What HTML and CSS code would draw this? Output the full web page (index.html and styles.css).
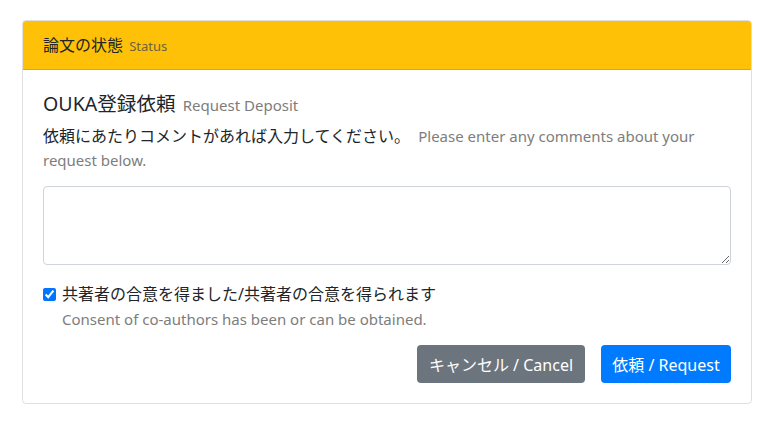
FILE: index.html
```html
<!DOCTYPE html>
<html lang="ja">
<head>
<meta charset="utf-8">
<link rel="stylesheet" href="styles.css">
</head>
<body>
<div class="card">
  <div class="card-header">論文の状態 <small class="muted">Status</small></div>
  <div class="card-body">
    <h5 class="title">OUKA登録依頼 <small class="muted sub">Request Deposit</small></h5>
    <p class="desc">依頼にあたりコメントがあれば入力してください。 <span class="muted en">Please enter any comments about your request below.</span></p>
    <textarea class="comment"></textarea>
    <div class="check">
      <input type="checkbox" checked class="check-input">
      <div>
        <div class="check-label">共著者の合意を得ました/共著者の合意を得られます</div>
        <div class="muted en small">Consent of co-authors has been or can be obtained.</div>
      </div>
    </div>
    <div class="actions">
      <button class="btn btn-secondary">キャンセル / Cancel</button>
      <button class="btn btn-primary">依頼 / Request</button>
    </div>
  </div>
</div>
</body>
</html>
```
FILE: styles.css
```css
* { box-sizing: border-box; }
body {
  margin: 0;
  padding: 20px 22px;
  font-family: "Noto Sans", "Noto Sans CJK JP", sans-serif;
  font-size: 16px;
  color: #212529;
  background: #fff;
}
.card {
  border: 1px solid rgba(0,0,0,.125);
  border-radius: 4px;
  width: 730px;
}
.card-header {
  background: #ffc107;
  border-bottom: 1px solid rgba(0,0,0,.125);
  border-radius: 3px 3px 0 0;
  padding: 12px 20px;
  height: 49px;
  font-size: 16px;
  line-height: 24px;
}
.card-header .muted { font-size: 13px; color: #6c6242; margin-left: 2px; }
.muted { color: #7d7d7d; }
.card-body { padding: 21px 20px 20px; }
.title {
  margin: 0 0 6px;
  font-size: 19.6px;
  font-weight: 400;
  line-height: 26px;
}
.title .sub { font-size: 15px; margin-left: 2px; }
.desc {
  margin: 0 0 14px;
  font-size: 16px;
  line-height: 24px;
}
.en { font-size: 15px; }
.desc .en { margin-left: 4px; }
.comment {
  display: block;
  width: 688px;
  height: 79px;
  border: 1px solid #ced4da;
  border-radius: 4px;
  margin: 0 0 17px;
  resize: vertical;
}
.check { display: flex; gap: 6px; }
.check-input {
  width: 13px; height: 13px; margin: 6px 0 0;
  accent-color: #0075ff;
}
.check-label { font-size: 16px; line-height: 24px; }
.small { line-height: 26px; }
.actions {
  display: flex;
  justify-content: flex-end;
  gap: 16px;
  margin-top: 13px;
}
.btn {
  font-family: "Noto Sans", "Noto Sans CJK JP", sans-serif;
  font-size: 16px;
  border: 1px solid transparent;
  border-radius: 4px;
  padding: 0;
  height: 38px;
  color: #fff;
  white-space: nowrap;
}
.btn-secondary { background: #6c757d; width: 168px; }
.btn-primary { background: #007bff; width: 130px; }
```
